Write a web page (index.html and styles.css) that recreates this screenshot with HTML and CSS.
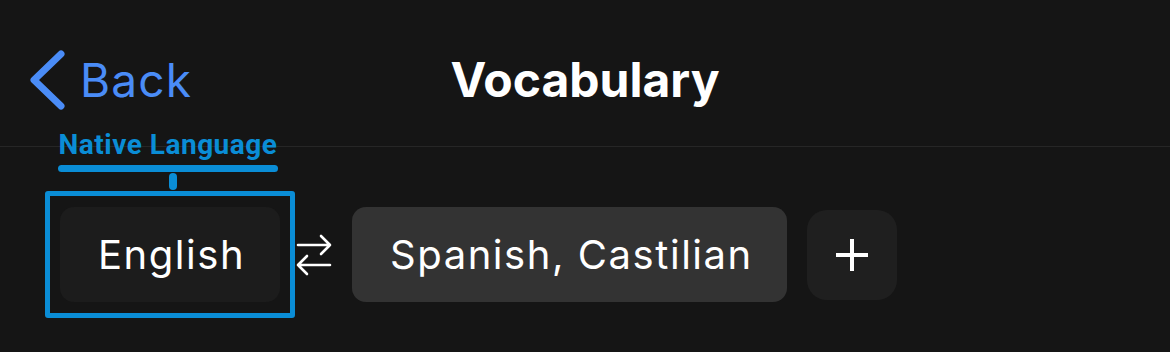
FILE: index.html
```html
<!DOCTYPE html>
<html lang="en">
<head>
<meta charset="utf-8">
<title>Vocabulary</title>
<link rel="stylesheet" href="styles.css">
</head>
<body>
<header class="navbar">
  <a class="back" href="#">
    <svg class="chevron" width="40" height="60" viewBox="0 0 40 60"><polyline points="35,4 8,30 35,56" fill="none" stroke="#4a8cf7" stroke-width="7" stroke-linecap="round" stroke-linejoin="round"/></svg>
    <span class="back-label">Back</span>
  </a>
  <h1 class="title">Vocabulary</h1>
  <div class="spacer"></div>
</header>
<main class="languages">
  <div class="native">
    <button class="lang lang-native">English</button>
    <div class="annotation">
      <span class="annotation-label">Native Language</span>
      <span class="annotation-bar"></span>
      <span class="annotation-stub"></span>
      <span class="annotation-box"></span>
    </div>
  </div>
  <svg class="swap" width="36" height="42" viewBox="0 0 36 42"><g fill="none" stroke="#fff" stroke-width="2.6" stroke-linecap="round" stroke-linejoin="round"><path d="M2 11 H34 M25 2 L34 11 L25 20"/><path d="M34 31 H2 M11 22 L2 31 L11 40"/></g></svg>
  <button class="lang lang-target">Spanish, Castilian</button>
  <button class="add" aria-label="Add language">
    <svg width="34" height="34" viewBox="0 0 34 34"><path d="M17 1 V33 M1 17 H33" stroke="#fff" stroke-width="4" fill="none"/></svg>
  </button>
</main>
</body>
</html>
```
FILE: styles.css
```css
html, body {
  margin: 0;
  padding: 0;
  background: #151515;
  color: #fff;
  font-family: Inter, "Liberation Sans", sans-serif;
}

body {
  min-height: 352px;
}

.navbar {
  display: grid;
  grid-template-columns: 1fr auto 1fr;
  align-items: start;
  padding: 50px 0 36px 26px;
  border-bottom: 1px solid #262626;
}

.back {
  display: flex;
  align-items: center;
  gap: 14px;
  text-decoration: none;
  color: #4a8cf7;
  height: 60px;
}

.chevron {
  display: block;
}

.back-label {
  font-size: 46px;
  line-height: 60px;
  font-weight: 400;
  letter-spacing: 1.2px;
}

.title {
  margin: 0;
  font-size: 48px;
  line-height: 60px;
  font-weight: 700;
  color: #fff;
  transform: translateX(-13px);
}

.languages {
  display: flex;
  align-items: center;
  padding: 60px 0 40px 60px;
}

.native {
  position: relative;
}

.lang {
  display: block;
  flex: none;
  box-sizing: border-box;
  border: 0;
  margin: 0;
  height: 95px;
  padding: 0 0 0 38px;
  border-radius: 14px;
  font-family: Inter, "Liberation Sans", sans-serif;
  font-size: 40px;
  line-height: 95px;
  letter-spacing: 1.55px;
  color: #fff;
  text-align: left;
  white-space: nowrap;
}

.lang-native {
  background: #1c1c1c;
  width: 220px;
}

.lang-target {
  background: #333333;
  width: 435px;
}

.swap {
  display: block;
  flex: none;
  margin: 0 20px 0 16px;
}

.add {
  display: flex;
  flex: none;
  align-items: center;
  justify-content: center;
  width: 90px;
  height: 90px;
  margin-left: 20px;
  padding: 0;
  border: 0;
  border-radius: 20px;
  background: #1f1f1f;
}

.annotation {
  position: absolute;
  inset: 0;
  pointer-events: none;
}

.annotation-label {
  position: absolute;
  left: -2px;
  top: -77px;
  width: 220px;
  text-align: center;
  font-family: Roboto, "Liberation Sans", sans-serif;
  font-weight: 700;
  font-size: 28px;
  line-height: 30px;
  letter-spacing: 0.5px;
  color: #0a8dd6;
  white-space: nowrap;
}

.annotation-bar {
  position: absolute;
  left: -2px;
  top: -42px;
  width: 220px;
  height: 7px;
  border-radius: 4px;
  background: #0a8dd6;
}

.annotation-stub {
  position: absolute;
  left: 109px;
  top: -34px;
  width: 8px;
  height: 17px;
  border-radius: 4px;
  background: #0a8dd6;
}

.annotation-box {
  position: absolute;
  left: -15px;
  top: -16px;
  width: 250px;
  height: 127px;
  box-sizing: border-box;
  border: 5px solid #0a8dd6;
  border-radius: 3px;
}
```
